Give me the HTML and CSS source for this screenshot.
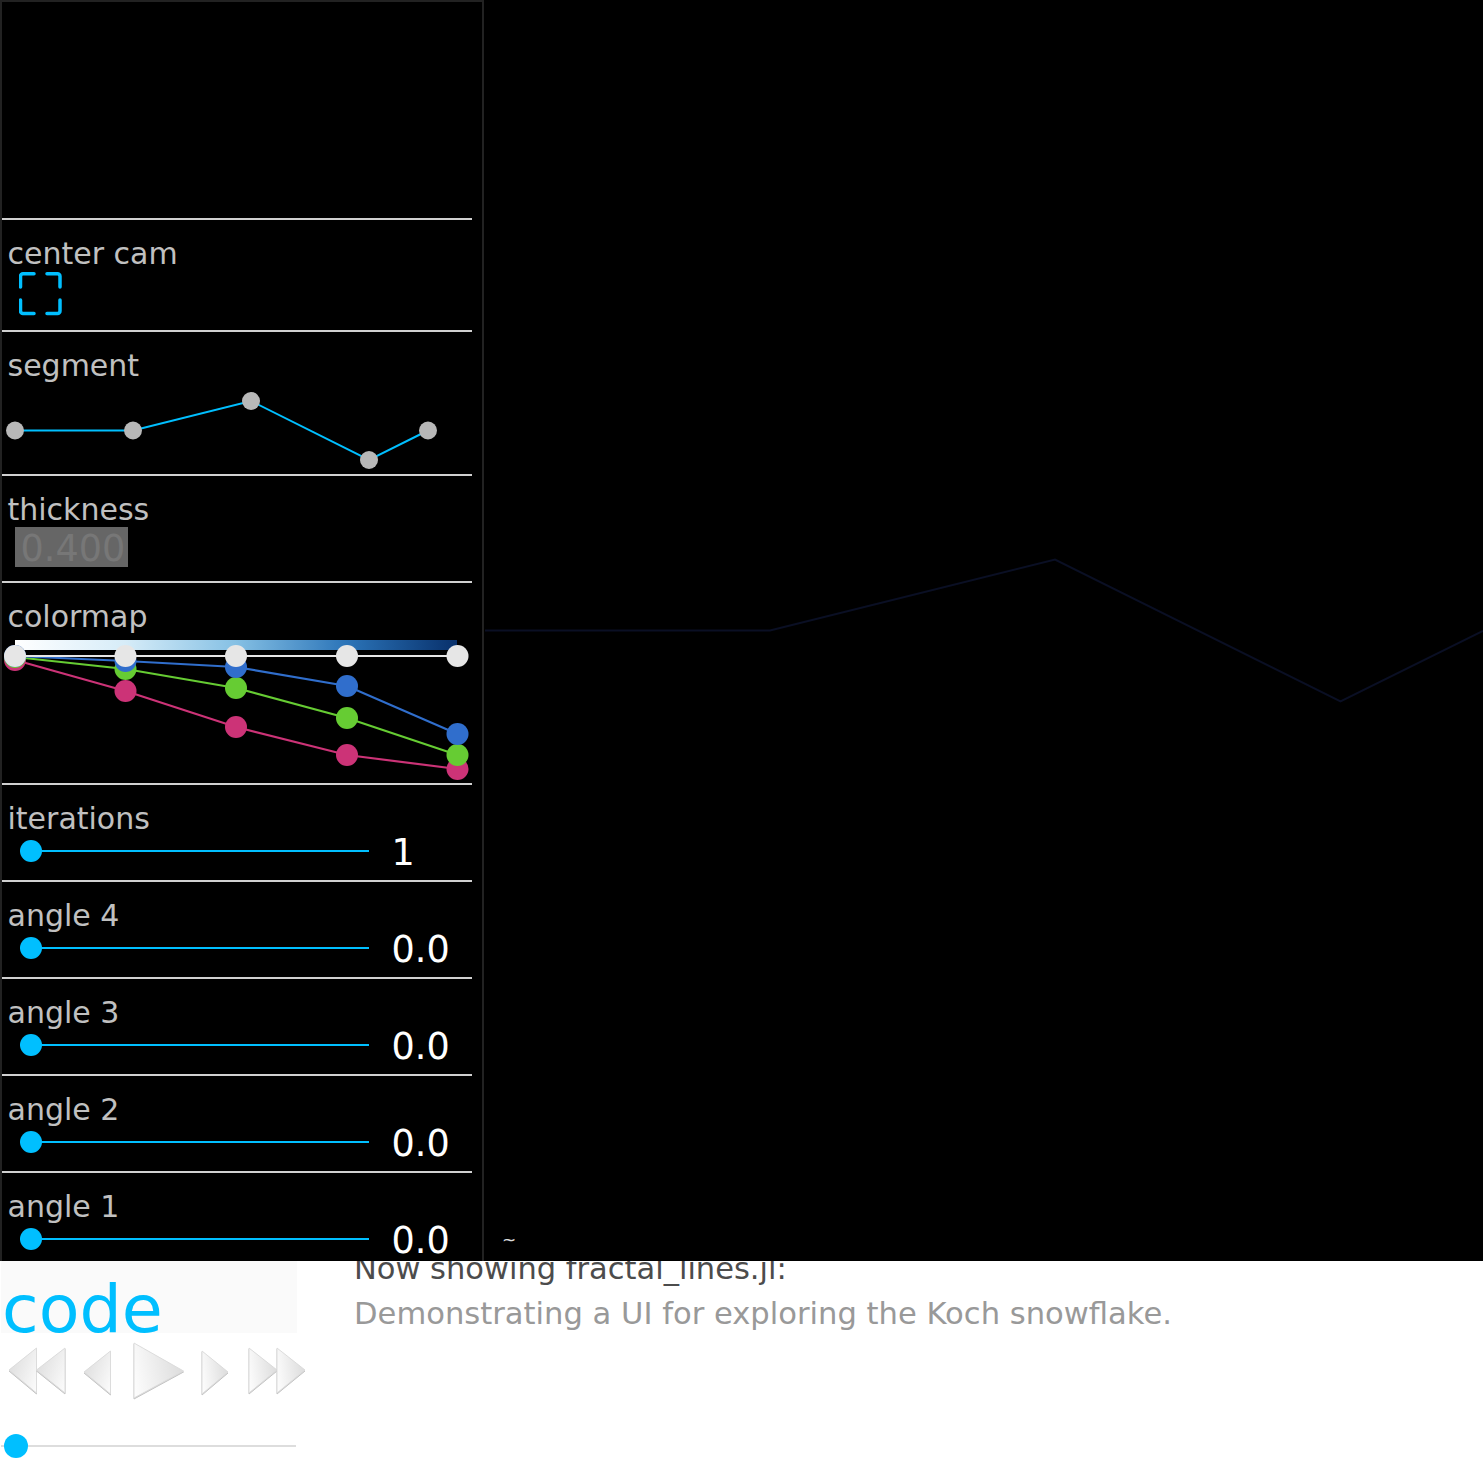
FILE: index.html
```html
<!DOCTYPE html>
<html lang="en">
<head>
<meta charset="UTF-8">
<meta name="viewport" content="width=device-width, initial-scale=1.0">
<title>fractal_lines.jl</title>
<link rel="stylesheet" href="styles.css">
</head>
<body>
<div class="stage">
  <div class="panel">
    <div class="row row-top"></div>

    <div class="row row-cam">
      <div class="label">center cam</div>
      <svg class="cam-icon" width="44" height="45" viewBox="19 271 44 45">
        <path d="M34 273.800H23a2.500 2.500 0 0 0-2.500 2.500V287M47 273.800H57.500a2.500 2.500 0 0 1 2.500 2.500V287M34 313.500H23a2.500 2.500 0 0 1-2.500-2.500V300M47 313.500H57.500a2.500 2.500 0 0 0 2.500-2.500V300"/>
      </svg>
    </div>

    <div class="row row-segment">
      <div class="label">segment</div>
      <svg class="plot" width="470" height="90" viewBox="2 384 470 90">
        <polyline class="seg-line" points="15,430.500 133,430.500 251,401 369,460 428,430.500"/>
        <g class="seg-dots">
          <circle cx="15" cy="430.500" r="9"/>
          <circle cx="133" cy="430.500" r="9"/>
          <circle cx="251" cy="401" r="9"/>
          <circle cx="369" cy="460" r="9"/>
          <circle cx="428" cy="430.500" r="9"/>
        </g>
      </svg>
    </div>

    <div class="row row-thick">
      <div class="label">thickness</div>
      <div class="thick-box">0.400</div>
    </div>

    <div class="row row-cmap">
      <div class="label">colormap</div>
      <svg class="plot" width="470" height="147" viewBox="2 636 470 147">
        <defs>
          <linearGradient id="blues">
            <stop offset="0" stop-color="#ffffff"/>
            <stop offset="0.25" stop-color="#d6ecf8"/>
            <stop offset="0.5" stop-color="#85c0e4"/>
            <stop offset="0.75" stop-color="#2b74b8"/>
            <stop offset="1" stop-color="#08306b"/>
          </linearGradient>
        </defs>
        <rect x="15" y="640" width="442" height="10" fill="url(#blues)"/>
        <g class="ch ch-pink">
          <polyline points="15,660 125.500,691 236,727 347,755 457.500,769"/>
          <circle cx="15" cy="660" r="11"/><circle cx="125.500" cy="691" r="11"/><circle cx="236" cy="727" r="11"/><circle cx="347" cy="755" r="11"/><circle cx="457.500" cy="769" r="11"/>
        </g>
        <g class="ch ch-green">
          <polyline points="15,657 125.500,669 236,688 347,718 457.500,755"/>
          <circle cx="15" cy="657" r="11"/><circle cx="125.500" cy="669" r="11"/><circle cx="236" cy="688" r="11"/><circle cx="347" cy="718" r="11"/><circle cx="457.500" cy="755" r="11"/>
        </g>
        <g class="ch ch-blue">
          <polyline points="15,656 125.500,661 236,667 347,686 457.500,734"/>
          <circle cx="15" cy="656" r="11"/><circle cx="125.500" cy="661" r="11"/><circle cx="236" cy="667" r="11"/><circle cx="347" cy="686" r="11"/><circle cx="457.500" cy="734" r="11"/>
        </g>
        <g class="ch ch-white">
          <polyline points="15,656 125.500,656 236,656 347,656 457.500,656"/>
          <circle cx="15" cy="656" r="11"/><circle cx="125.500" cy="656" r="11"/><circle cx="236" cy="656" r="11"/><circle cx="347" cy="656" r="11"/><circle cx="457.500" cy="656" r="11"/>
        </g>
      </svg>
    </div>

    <div class="row row-slider">
      <div class="label">iterations</div>
      <div class="control"><div class="track"><span class="knob"></span></div><span class="value">1</span></div>
    </div>
    <div class="row row-slider">
      <div class="label">angle 4</div>
      <div class="control"><div class="track"><span class="knob"></span></div><span class="value">0.0</span></div>
    </div>
    <div class="row row-slider">
      <div class="label">angle 3</div>
      <div class="control"><div class="track"><span class="knob"></span></div><span class="value">0.0</span></div>
    </div>
    <div class="row row-slider">
      <div class="label">angle 2</div>
      <div class="control"><div class="track"><span class="knob"></span></div><span class="value">0.0</span></div>
    </div>
    <div class="row row-slider row-last">
      <div class="label">angle 1</div>
      <div class="control"><div class="track"><span class="knob"></span></div><span class="value">0.0</span></div>
    </div>
  </div>

  <div class="scene">
    <svg class="scene-svg" width="999" height="1261" viewBox="484 0 999 1261">
      <polyline points="485,630.500 770,630.500 1055,559.500 1340.500,701.500 1483,631"/>
    </svg>
    <span class="tick">~</span>
  </div>
</div>

<div class="below">
  <div class="side">
    <div class="code-box">code</div>
    <svg class="transport" width="310" height="62" viewBox="0 1340 310 62">
      <defs>
        <linearGradient id="btn-left" x1="0" y1="0.2" x2="1" y2="0.8">
          <stop offset="0" stop-color="#dcdcdc"/>
          <stop offset="1" stop-color="#fafafa"/>
        </linearGradient>
        <linearGradient id="btn-right" x1="1" y1="0.5" x2="0" y2="0.7">
          <stop offset="0" stop-color="#dcdcdc"/>
          <stop offset="1" stop-color="#fcfcfc"/>
        </linearGradient>
      </defs>
      <g class="btn-back">
        <polygon points="9,1370 36.500,1348 36.500,1393"/>
        <polygon points="36.500,1370 65,1348 65,1393"/>
        <polygon points="84,1372 110.500,1351 110.500,1394"/>
      </g>
      <g class="btn-fwd">
        <polygon points="134,1343 183.500,1371 134,1398"/>
        <polygon points="202,1351 228,1372 202,1394"/>
        <polygon points="249,1348 277,1370 249,1393"/>
        <polygon points="277,1348 305,1370 277,1393"/>
      </g>
    </svg>
    <div class="time-slider"><span class="time-knob"></span></div>
  </div>
  <div class="about">
    <div class="about-title">Now showing fractal_lines.jl:</div>
    <div class="about-text">Demonstrating a UI for exploring the Koch snowflake.</div>
  </div>
</div>
</body>
</html>
```

FILE: styles.css
```css
html,body{margin:0;padding:0;background:#fff;}
body{font-family:"DejaVu Sans",sans-serif;width:1483px;height:1483px;overflow:hidden;}

/* black 3d area */
.stage{position:relative;z-index:1;display:flex;height:1261px;background:#000;overflow:hidden;}
.panel{width:484px;height:1261px;box-sizing:border-box;border:2px solid #222;border-bottom:none;flex:none;overflow:hidden;}
.row{width:470px;box-sizing:border-box;border-bottom:2px solid #d0d0d0;padding-top:16px;}
.row-top{height:218px;padding:0;}
.row-cam{height:112px;}
.row-segment{height:144px;}
.row-thick{height:107px;}
.row-cmap{height:202px;}
.row-slider{height:97px;}
.row-last{border-bottom:none;}

.label{font-size:30px;line-height:36px;height:36px;color:#c0c0c0;padding-left:5.500px;}
.cam-icon{display:block;margin:-1px 0 0 17px;}
.cam-icon path{fill:none;stroke:#00bfff;stroke-width:3.500px;stroke-linecap:round;}
.plot{display:block;}
.row-cmap .plot{margin-top:1px;}
.seg-line{fill:none;stroke:#00bfff;stroke-width:2px;}
.seg-dots{fill:#b8b8b8;}

.thick-box{width:113px;height:40px;margin:-1px 0 0 13px;background:#666;color:#777;font-size:36.600px;line-height:44px;padding-left:5.500px;box-sizing:border-box;}

.ch polyline{fill:none;stroke-width:2.200px;}
.ch-pink{fill:#cc3377;}
.ch-pink polyline{stroke:#cc3377;}
.ch-green{fill:#66cc33;}
.ch-green polyline{stroke:#66cc33;}
.ch-blue{fill:#306ecc;}
.ch-blue polyline{stroke:#306ecc;}
.ch-white{fill:#e6e6e6;}
.ch-white polyline{stroke:#e6e6e6;}

.control{display:flex;align-items:center;height:28px;}
.track{position:relative;width:349px;height:2px;margin-left:18px;background:#00bfff;flex:none;}
.knob{position:absolute;left:0;top:-10px;width:22px;height:22px;border-radius:50%;background:#00bfff;}
.value{margin-left:22.500px;color:#fff;font-size:36.600px;line-height:28px;position:relative;top:2px;}

.scene{position:relative;flex:1;}
.scene-svg{display:block;}
.scene-svg polyline{fill:none;stroke:#0a0f24;stroke-width:2px;}
.tick{position:absolute;left:18px;top:1231px;color:#ddd;font-size:17px;line-height:18px;}

/* white part under the stage */
.below{display:flex;height:222px;}
.side{width:296px;margin-left:1px;flex:none;}
.code-box{height:48px;padding:24px 0 0 1px;background:#fafafa;color:#00bfff;font-size:66.700px;line-height:48px;}
.transport{display:block;margin:7px 0 0 -1px;}
.transport polygon{stroke-width:1px;filter:drop-shadow(0.5px 1px 0.500px #c4c4c4);}
.time-slider{position:relative;width:295px;height:2px;margin-top:43px;background:#ddd;}
.time-knob{position:absolute;left:3px;top:-11px;width:24px;height:24px;border-radius:50%;background:#00bfff;}

.btn-back polygon{fill:url(#btn-left);stroke:#dcdcdc;}
.btn-fwd polygon{fill:url(#btn-right);stroke:#dcdcdc;}

.about{margin:-10px 0 0 57px;}
.about-title{font-size:30.500px;line-height:36px;color:#4c4c4c;}
.about-text{font-size:30.600px;line-height:36px;color:#999;margin-top:9px;}
```
